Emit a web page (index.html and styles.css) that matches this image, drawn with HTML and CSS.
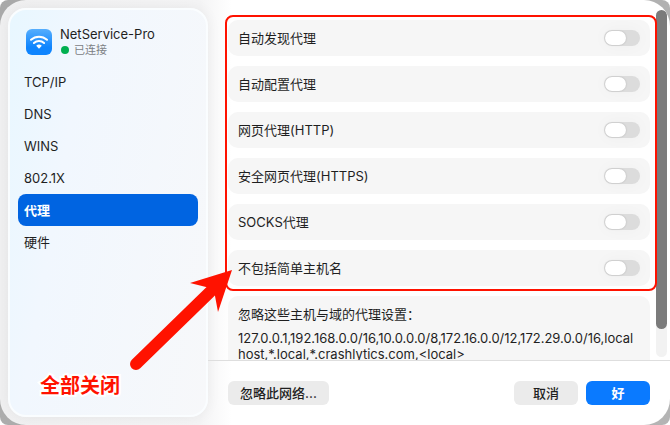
FILE: index.html
```html
<!DOCTYPE html>
<html lang="zh-CN">
<head>
    <meta charset="UTF-8">
    <meta name="viewport" content="width=device-width, initial-scale=1.0">
    <title>NetService-Pro</title>
    <link rel="stylesheet" href="styles.css">
</head>
<body>
    <div class="desktop">
    <div class="window">
        <aside class="sidebar">
            <div class="network">
                <svg class="network-icon" viewBox="0 0 26 26" aria-hidden="true">
                    <defs>
                        <linearGradient id="wifi-fill" x1="0" y1="0" x2="0" y2="1">
                            <stop offset="0" stop-color="#56aefd"/>
                            <stop offset="0.7" stop-color="#0f85fe"/>
                        </linearGradient>
                    </defs>
                    <rect width="26" height="26" rx="6" fill="url(#wifi-fill)"/>
                    <g fill="none" stroke="#fff" stroke-width="2" stroke-linecap="round">
                        <path d="M5 10.8a11.8 11.8 0 0 1 16 0"/>
                        <path d="M7.9 14a7.6 7.6 0 0 1 10.2 0"/>
                    </g>
                    <path d="M10.2 16.8a4.2 4.2 0 0 1 5.6 0L13 19.8z" fill="#fff"/>
                </svg>
                <div>
                    <div class="network-name">NetService-Pro</div>
                    <div class="network-status"><span class="dot"></span>已连接</div>
                </div>
            </div>
            <nav class="menu">
                <a href="#tcpip">TCP/IP</a>
                <a href="#dns">DNS</a>
                <a href="#wins">WINS</a>
                <a href="#8021x">802.1X</a>
                <a href="#proxy" class="active">代理</a>
                <a href="#hardware">硬件</a>
            </nav>
        </aside>

        <main class="main">
            <div class="scroll-area">
                <div class="options">
                    <label class="card option">自动发现代理<input type="checkbox" class="switch"></label>
                    <label class="card option">自动配置代理<input type="checkbox" class="switch"></label>
                    <label class="card option">网页代理(HTTP)<input type="checkbox" class="switch"></label>
                    <label class="card option">安全网页代理(HTTPS)<input type="checkbox" class="switch"></label>
                    <label class="card option">SOCKS代理<input type="checkbox" class="switch"></label>
                    <label class="card option">不包括简单主机名<input type="checkbox" class="switch"></label>
                    <div class="highlight"></div>
                </div>
                <div class="card bypass">
                    <label for="bypass">忽略这些主机与域的代理设置：</label>
                    <textarea id="bypass" rows="3">127.0.0.1,192.168.0.0/16,10.0.0.0/8,172.16.0.0/12,172.29.0.0/16,localhost,*.local,*.crashlytics.com,&lt;local&gt;</textarea>
                </div>
                <div class="scrollbar"><div class="thumb"></div></div>
            </div>
            <footer class="footer">
                <button type="button" class="btn">忽略此网络...</button>
                <button type="button" class="btn btn-small push">取消</button>
                <button type="button" class="btn btn-small primary">好</button>
            </footer>
        </main>

        <svg class="arrow" viewBox="0 0 104 102" aria-hidden="true">
            <path d="M6 96L80 24" stroke="#ff1200" stroke-width="12" stroke-linecap="round"/>
            <path d="M102 2L60 15L76 19L85 28L88 44z" fill="#ff1200"/>
        </svg>
        <div class="note">全部关闭</div>
    </div>
    </div>
</body>
</html>
```
FILE: styles.css
```css
* {
    box-sizing: border-box;
}
body {
    margin: 0;
    font-family: Inter, "Noto Sans CJK SC", sans-serif;
    font-size: 13px;
    line-height: 16px;
    color: #1f1f1f;
    background: #fff;
}
.desktop {
    border-radius: 8px;
    background: linear-gradient(120deg, #a9a9a9, #b4b4b4);
}
.window {
    position: relative;
    display: flex;
    height: 100vh;
    padding: 8px 0 8px 8px;
    border-radius: 26px;
    background: linear-gradient(90deg, #f0f0f1 0, #f4f4f5 200px, #fff 232px);
    overflow: hidden;
}

/* sidebar */
.sidebar {
    width: 200px;
    flex-shrink: 0;
    padding: 16px 8px;
    border: 2px solid #fafdff;
    border-radius: 18px;
    background: linear-gradient(100deg, #e8f7ff 0%, #f1f7fe 30%, #f7f8fa 100%);
    box-shadow: 0 0 14px rgba(0, 0, 0, 0.06);
}
.network {
    display: flex;
    align-items: center;
    gap: 8px;
    padding: 0 8px;
    height: 32px;
}
.network-icon {
    width: 26px;
    height: 26px;
}
.network-status {
    display: flex;
    align-items: center;
    gap: 5px;
    padding-left: 1px;
    font-size: 11px;
    color: #7c8084;
}
.dot {
    width: 8px;
    height: 8px;
    border-radius: 50%;
    background: #00b050;
}
.menu {
    margin-top: 8px;
}
.menu a {
    display: flex;
    align-items: center;
    height: 32px;
    padding: 0 6px;
    border-radius: 8px;
    color: inherit;
    text-decoration: none;
}
.menu .active {
    background: #0064e1;
    color: #fff;
    font-weight: 700;
}

/* proxy settings */
.main {
    flex: 1;
    min-width: 0;
    display: flex;
    flex-direction: column;
    margin: -8px 0;
}
.scroll-area {
    position: relative;
    flex: 1;
    min-height: 0;
    padding: 20px 20px 0;
    overflow: hidden;
}
.options {
    position: relative;
    display: grid;
    gap: 10px;
}
.card {
    padding: 10px;
    border-radius: 10px;
    background: #f6f6f6;
}
.option {
    display: flex;
    align-items: center;
    justify-content: space-between;
    height: 36px;
}
.switch {
    appearance: none;
    width: 36px;
    height: 16px;
    margin: 0;
    border-radius: 8px;
    background: #dcdcdc;
    box-shadow: 0 0 16px rgba(0, 0, 0, 0.03);
}
.switch::before {
    content: "";
    display: block;
    width: 21px;
    height: 14px;
    margin: 1px;
    border-radius: 7px;
    background: #fff;
    box-shadow: 0 0 2px rgba(0, 0, 0, 0.2);
}
.switch:checked {
    background: #0a7aff;
}
.switch:checked::before {
    margin-left: 14px;
}
.bypass {
    margin-top: 10px;
}
.bypass label {
    display: block;
}
.bypass textarea {
    display: block;
    width: 100%;
    margin-top: 8px;
    padding: 0;
    border: none;
    background: none;
    color: inherit;
    font: inherit;
    word-break: break-all;
    resize: none;
    overflow: hidden;
}
.scrollbar {
    position: absolute;
    top: 10px;
    right: 3px;
    bottom: 3px;
    width: 11px;
    border-radius: 6px;
    background: #f2f2f2;
}
.thumb {
    height: 92%;
    border-radius: 6px;
    background: #7b7b7b;
}
.footer {
    display: flex;
    gap: 8px;
    padding: 20px;
    border-top: 1px solid #dedede;
}
.btn {
    height: 24px;
    padding: 0 12px;
    border: none;
    border-radius: 6px;
    background: #ebebeb;
    color: inherit;
    font: inherit;
    font-weight: 500;
}
.btn-small {
    width: 64px;
}
.push {
    margin-left: auto;
}
.primary {
    background: #0a7aff;
    color: #fff;
    font-weight: 700;
}

/* callouts drawn over the window */
.highlight {
    position: absolute;
    z-index: 1;
    inset: -5px -7px -5px -3px;
    border: 2px solid #ff1200;
    border-radius: 8px;
    pointer-events: none;
}
.arrow {
    position: absolute;
    left: 130px;
    top: 268px;
    width: 104px;
    height: 102px;
    pointer-events: none;
}
.note {
    position: absolute;
    left: 40px;
    top: 374px;
    font-size: 20px;
    line-height: 24px;
    font-weight: 700;
    color: #ff1200;
    -webkit-text-stroke: 4px #fff;
    paint-order: stroke fill;
}
```
